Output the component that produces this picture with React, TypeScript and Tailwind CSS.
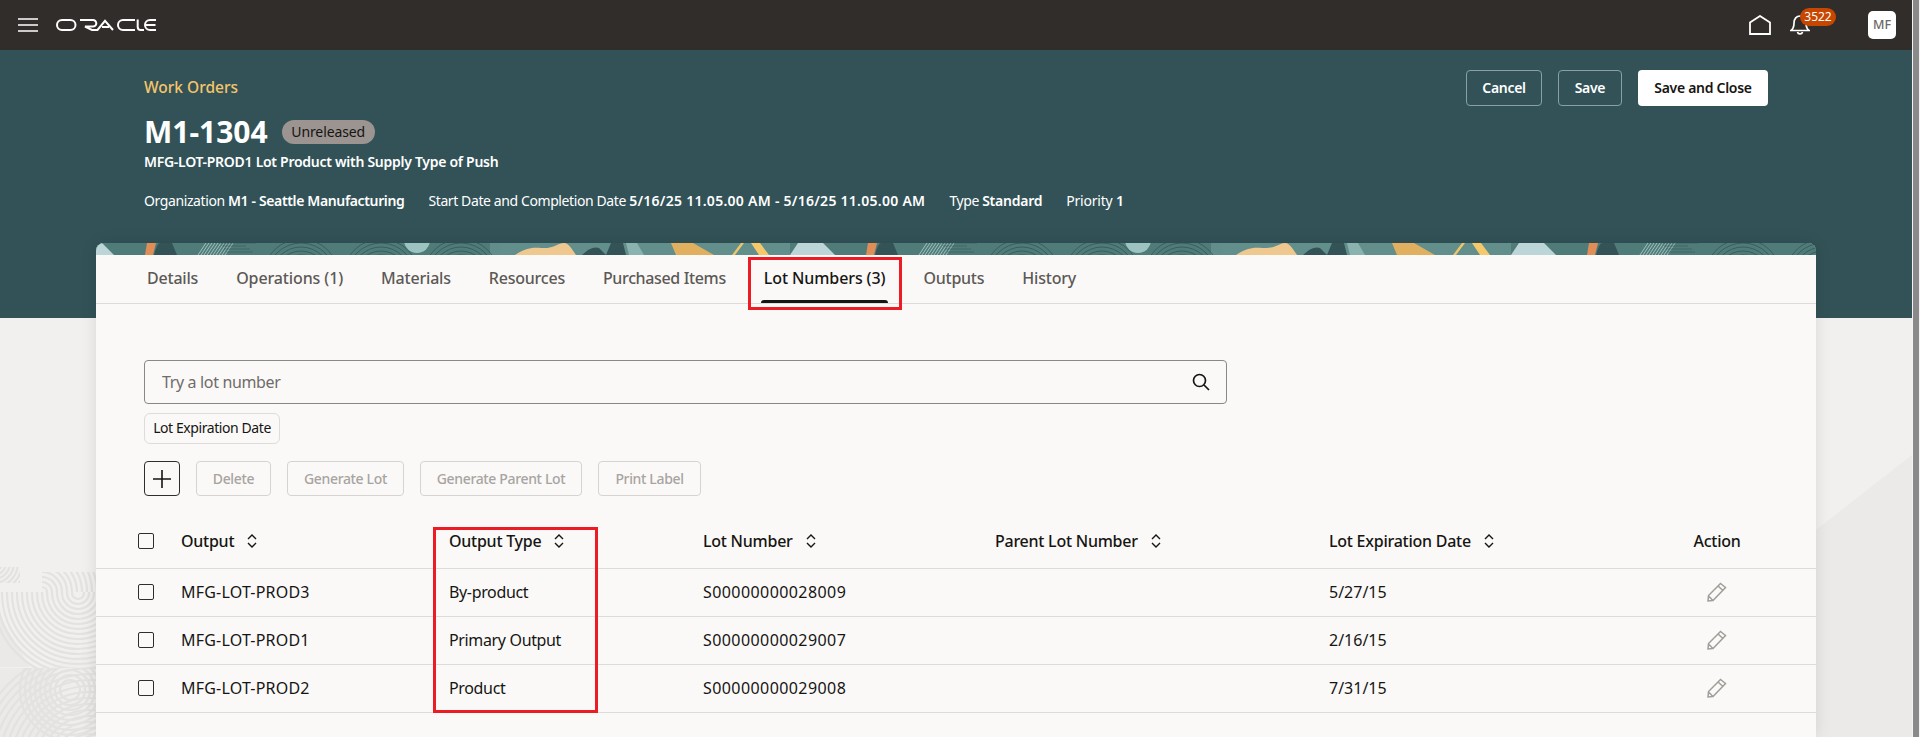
import React from "react";

const tabs = [
  { t: "Details", c: "tracking-[-0.2px]" },
  { t: "Operations (1)", c: "tracking-[-0.12px]" },
  { t: "Materials", c: "tracking-[-0.2px]" },
  { t: "Resources", c: "tracking-[-0.22px]" },
  { t: "Purchased Items", c: "tracking-[-0.36px]" },
  { t: "Lot Numbers (3)", c: "tracking-[-0.1px]" },
  { t: "Outputs", c: "tracking-[-0.25px]" },
  { t: "History", c: "tracking-[-0.2px]" },
];
const rows = [
  ["MFG-LOT-PROD3", "By-product", "S00000000028009", "5/27/15"],
  ["MFG-LOT-PROD1", "Primary Output", "S00000000029007", "2/16/15"],
  ["MFG-LOT-PROD2", "Product", "S00000000029008", "7/31/15"],
];
const gridCols = "grid grid-cols-[43px_268px_254px_292px_334px_339px_98px] pl-[42px]";

function Sort() {
  return (
    <svg width="10" height="14" viewBox="0 0 10 14" fill="none" stroke="#161513" strokeWidth="1.4" className="ml-[13px] shrink-0">
      <path d="M1 5 L5 1 L9 5 M1 9 L5 13 L9 9" />
    </svg>
  );
}

function Check() {
  return <div className="w-4 h-4 border-[1.5px] border-[#312d2a] rounded-[2px]" />;
}

function Pencil() {
  return (
    <svg width="20" height="20" viewBox="0 0 20 20" fill="none" stroke="#a19d99" strokeWidth="1.5">
      <path d="M1 19 L1.5 13.5 L13.5 1.5 L18.5 5.5 L6 18.5 Z M11 4 L16 8.5 M1.5 14 L6 18.5" />
    </svg>
  );
}

function Logo() {
  return (
    <svg width="100" height="12" viewBox="0 0 100 12" fill="none" stroke="#ffffff" strokeWidth="2">
      <rect x="1" y="1" width="18.5" height="10" rx="5" />
      <path d="M24 1 H37 a3.2 3.2 0 0 1 0 6.6 H29 L36 11 H40" />
      <path d="M39 11 H41.5 L49 1.8 L57 11" />
      <path d="M46 8 H53" />
      <path d="M79 1 H67 a5 5 0 0 0 0 10 H79" />
      <path d="M81.7 0.5 V8 a3 3 0 0 0 3 3 H88" />
      <path d="M100 1 H94 a5 5 0 0 0 0 10 H100 M90 6 H99.5" />
    </svg>
  );
}

function Fingerprint({ cx }: { cx: number }) {
  const radii = [6, 10, 14, 18, 22, 26, 30, 34, 38];
  return (
    <g fill="none" stroke="#2f5255" strokeWidth="0.8" opacity="0.85">
      {radii.map((r) => (
        <circle key={r} cx={cx} cy={34} r={r} />
      ))}
    </g>
  );
}

function Tile({ x }: { x: number }) {
  return (
    <g transform={`translate(${x} 0)`}>
      <rect x="-27" y="0" width="425" height="12" fill="#4f7c78" />
      <rect x="394" y="0" width="300" height="12" fill="#628f8b" />
      <polygon points="-19,0 6,0 18,12 -27,12" fill="#bcd6d8" />
      <polygon points="51,0 60,0 57,12 49,12" fill="#e08e55" />
      <path d="M58 12 Q61 0 64 0 L76 0 L81 12 Z" fill="#345357" />
      <g stroke="#a9c9c6" strokeWidth="0.9">
        {[0, 3, 6, 9, 12, 15, 18, 21, 24, 27].map((d) => (
          <line key={d} x1={102 + d} y1="12" x2={110 + d} y2="0" />
        ))}
      </g>
      <g stroke="#2f5255" strokeWidth="0.8" fill="none">
        <path d="M124 0 H160 M126 3 H150 M128 6 H154 M130 9 H157" opacity="0.6" />
      </g>
      <Fingerprint cx={205} />
      <Fingerprint cx={285} />
      <Fingerprint cx={365} />
      <circle cx="321" cy="-3" r="13" fill="#9cc3c0" />
      <path d="M419 12 C428 6 435 4 445 5 C458 6 462 0 468 0 C473 0 477 8 480 12 Z" fill="#efc88f" />
      <path d="M486 12 C492 6 498 3 503 5 L510 12 Z" fill="#345357" />
      <polygon points="515,0 527,0 530,12 510,12" fill="#345357" />
      <polygon points="530,0 541,0 548,12 533,12" fill="#8ab2ae" />
      <polygon points="575,0 597,0 618,12 580,12" fill="#e0b060" />
      <polygon points="645,0 648,0 639,12 636,12" fill="#f0c566" />
      <polygon points="655,0 664,0 673,12 663,12" fill="#f5c96b" />
    </g>
  );
}

function Banner() {
  return (
    <svg width="1720" height="12" viewBox="0 0 1720 12" className="block rounded-t-[8px]">
      <rect width="1720" height="12" fill="#4f7c78" />
      <Tile x={0} />
      <Tile x={721} />
      <Tile x={1442} />
    </svg>
  );
}

function Arcs({ cx, cy, from, to, step }: { cx: number; cy: number; from: number; to: number; step: number }) {
  const list: number[] = [];
  for (let r = from; r <= to; r += step) list.push(r);
  return (
    <>
      {list.map((r) => (
        <circle key={r} cx={cx} cy={cy} r={r} />
      ))}
    </>
  );
}

function BackgroundArt() {
  return (
    <svg width="1912" height="737" viewBox="0 0 1912 737" className="absolute inset-0" fill="none">
      <defs>
        <clipPath id="p1"><rect x="0" y="567" width="20" height="16" /></clipPath>
        <clipPath id="p2"><rect x="42" y="572" width="54" height="20" /></clipPath>
        <clipPath id="p3"><rect x="0" y="592" width="96" height="76" /></clipPath>
        <clipPath id="p4"><rect x="0" y="668" width="96" height="69" /></clipPath>
      </defs>
      <polygon points="0,617 30,667 0,667" fill="#eae9e8" />
      <polygon points="0,668 96,668 96,737 0,737" fill="#ebeae9" />
      <polygon points="50,668 60,737 96,737 96,650" fill="#efeeed" />
      <polygon points="1816,530 1880,480 1912,455 1912,737 1816,737" fill="#ebeae8" />
      <g stroke="#e3e2e0" strokeWidth="2.2">
        <g clipPath="url(#p1)"><Arcs cx={-6} cy={563} from={8} to={32} step={4} /></g>
        <g clipPath="url(#p2)"><Arcs cx={42} cy={592} from={5} to={55} step={5} /></g>
        <g clipPath="url(#p3)"><Arcs cx={78} cy={593} from={6} to={86} step={5} /></g>
        <g clipPath="url(#p4)"><Arcs cx={90} cy={765} from={25} to={115} step={6} /><Arcs cx={70} cy={690} from={10} to={50} step={5} /></g>
      </g>
    </svg>
  );
}

export default function App() {
  return (
    <div className="relative h-[737px] w-[1920px] overflow-hidden flex bg-[#f1f0ee] font-['Noto_Sans',sans-serif]">
      <div className="relative w-[1912px] shrink-0">
        <BackgroundArt />
        <div className="relative">
          <header className="h-[50px] bg-[#312d2a] flex items-center">
            <svg width="20" height="14" viewBox="0 0 20 14" className="ml-[18px]" stroke="#fff" strokeWidth="1.6">
              <path d="M0 1 H20 M0 7 H20 M0 13 H20" />
            </svg>
            <div className="ml-[18px]">
              <Logo />
            </div>
            <div className="ml-auto flex items-center h-full relative">
              <svg width="22" height="20" viewBox="0 0 22 20" fill="none" stroke="#fff" strokeWidth="1.8" className="mr-[19px]">
                <path d="M1 19 V7.5 L11 1 L21 7.5 V19 Z" />
              </svg>
              <div className="relative w-5 h-5 mr-[58px]">
                <svg width="20" height="20" viewBox="0 0 20 20" fill="none" stroke="#fff" strokeWidth="1.7">
                  <path d="M1 15.5 C3 14 4 12 4 8 C4 3.5 6.5 1 10 1 C13.5 1 16 3.5 16 8 C16 12 17 14 19 15.5 Z" />
                  <path d="M7.5 17 C8 19.5 12 19.5 12.5 17" />
                </svg>
                <span className="absolute left-[10px] top-[-7px] w-9 h-[18px] rounded-full bg-[#c74600] text-white text-[12px] leading-[18px] text-center">
                  3522
                </span>
              </div>
              <div className="w-7 h-7 rounded-[5px] bg-white text-[#6b6865] text-[12.5px] font-medium flex items-center justify-center mr-4">
                MF
              </div>
            </div>
          </header>

          <section className="h-[268px] bg-[#325257] px-[144px] pt-5 flex justify-between items-start">
            <div className="text-white">
              <div className="text-[#f5c56a] text-[15.5px] font-medium leading-[34px] h-[34px]">Work Orders</div>
              <div className="flex items-center mt-[10px] h-[36px]">
                <h1 className="text-[30px] font-bold leading-[36px]">M1-1304</h1>
                <span className="ml-[14px] h-[24px] w-[93px] rounded-full bg-[#9b9490] text-[#161513] text-[14px] leading-[24px] text-center tracking-[-0.1px]">
                  Unreleased
                </span>
              </div>
              <div className="text-[14px] font-semibold leading-[20px] mt-[2px] tracking-[-0.28px]">MFG-LOT-PROD1 Lot Product with Supply Type of Push</div>
              <div className="flex gap-6 text-[14px] leading-[20px] mt-[19px] tracking-[-0.4px]">
                <span>Organization <b className="font-semibold tracking-[-0.36px]">M1 - Seattle Manufacturing</b></span>
                <span>Start Date and Completion Date <b className="font-semibold tracking-[0.27px]">5/16/25 11.05.00 AM - 5/16/25 11.05.00 AM</b></span>
                <span>Type <b className="font-semibold tracking-[-0.25px]">Standard</b></span>
                <span className="tracking-[-0.2px]">Priority <b className="font-semibold">1</b></span>
              </div>
            </div>
            <div className="flex gap-4 text-[14px] font-semibold tracking-[-0.3px]">
              <button className="w-[76px] h-[36px] pb-[2px] rounded border border-[#8aa0a2] text-white">Cancel</button>
              <button className="w-[64px] h-[36px] pb-[2px] rounded border border-[#8aa0a2] text-white">Save</button>
              <button className="w-[130px] h-[36px] pb-[2px] rounded bg-white text-[#161513]">Save and Close</button>
            </div>
          </section>

          <main className="relative mt-[-75px] mx-[96px] w-[1720px] h-[494px] bg-[#fbf9f8] rounded-t-[8px] shadow-[0_0_16px_rgba(0,0,0,0.1)]">
            <Banner />
            <nav className="h-[49px] border-b border-[#dedcda] flex items-center pl-[51px] gap-[38px] pb-[2px]">
              {tabs.map(({ t, c }) => {
                const active = t.startsWith("Lot");
                return (
                  <div key={t} className={`relative h-full flex items-center text-[16px] font-medium whitespace-nowrap ${c} ${active ? "text-[#161513]" : "text-[#5c5956]"}`}>
                    {t}
                    {active && (
                      <>
                        <span className="absolute left-[-3px] right-[-3px] bottom-[-2px] h-[3px] bg-[#161513] rounded-t-[3px]" />
                        <span className="absolute left-[-16px] right-[-17px] top-[2px] h-[53px] border-[3px] border-[#ed1c24]" />
                      </>
                    )}
                  </div>
                );
              })}
            </nav>

            <div className="pl-[48px] pt-[56px]">
              <div className="w-[1083px] h-[44px] border border-[#8a8785] rounded flex items-center pl-[17px] pr-[16px] pb-[1px] justify-between text-[16px] text-[#6f6c69] tracking-[-0.35px]">
                <span>Try a lot number</span>
                <svg width="18" height="18" viewBox="0 0 18 18" fill="none" stroke="#161513" strokeWidth="1.7">
                  <circle cx="7.5" cy="7.5" r="6" />
                  <path d="M12 12 L17 17" />
                </svg>
              </div>
              <div className="mt-[9px] w-[136px] h-[31px] pb-[2px] border border-[#dedcda] rounded-md text-[14px] text-[#161513] flex items-center justify-center tracking-[-0.42px]">
                Lot Expiration Date
              </div>
              <div className="mt-[17px] flex gap-4 text-[14px] font-medium text-[#a8a4a0] tracking-[-0.35px]">
                <button className="w-[36px] h-[35px] rounded border border-[#312d2a] flex items-center justify-center">
                  <svg width="18" height="18" viewBox="0 0 18 18" stroke="#161513" strokeWidth="1.6">
                    <path d="M9 0 V18 M0 9 H18" />
                  </svg>
                </button>
                <button className="w-[75px] h-[35px] rounded border border-[#d6d3d0]">Delete</button>
                <button className="w-[117px] h-[35px] rounded border border-[#d6d3d0]">Generate Lot</button>
                <button className="w-[162px] h-[35px] rounded border border-[#d6d3d0]">Generate Parent Lot</button>
                <button className="w-[103px] h-[35px] rounded border border-[#d6d3d0]">Print Label</button>
              </div>
            </div>

            <div className="relative mt-[20px] text-[16px] text-[#161513]">
              <div className={`${gridCols} h-[53px] items-center border-b border-[#dedcda] pb-[3px] font-medium tracking-[-0.25px]`}>
                <Check />
                {["Output", "Output Type", "Lot Number", "Parent Lot Number", "Lot Expiration Date"].map((h) => (
                  <div key={h} className="flex items-center">
                    {h}
                    <Sort />
                  </div>
                ))}
                <div className="text-center">Action</div>
              </div>
              {rows.map((r) => (
                <div key={r[0]} className={`${gridCols} h-[48px] pb-[2px] items-center border-b border-[#dedcda]`}>
                  <Check />
                  <div className="tracking-[0.2px]">{r[0]}</div>
                  <div className="tracking-[-0.35px]">{r[1]}</div>
                  <div className="tracking-[0.42px]">{r[2]}</div>
                  <div />
                  <div>{r[3]}</div>
                  <div className="flex justify-center">
                    <Pencil />
                  </div>
                </div>
              ))}
              <div className="absolute left-[337px] top-[11px] w-[165px] h-[186px] border-[3px] border-[#ed1c24]" />
            </div>
          </main>
        </div>
      </div>
      <div className="w-2 px-[1px] bg-[#f4f4f4]">
        <div className="h-full bg-[#8a8a8a]" />
      </div>
    </div>
  );
}
